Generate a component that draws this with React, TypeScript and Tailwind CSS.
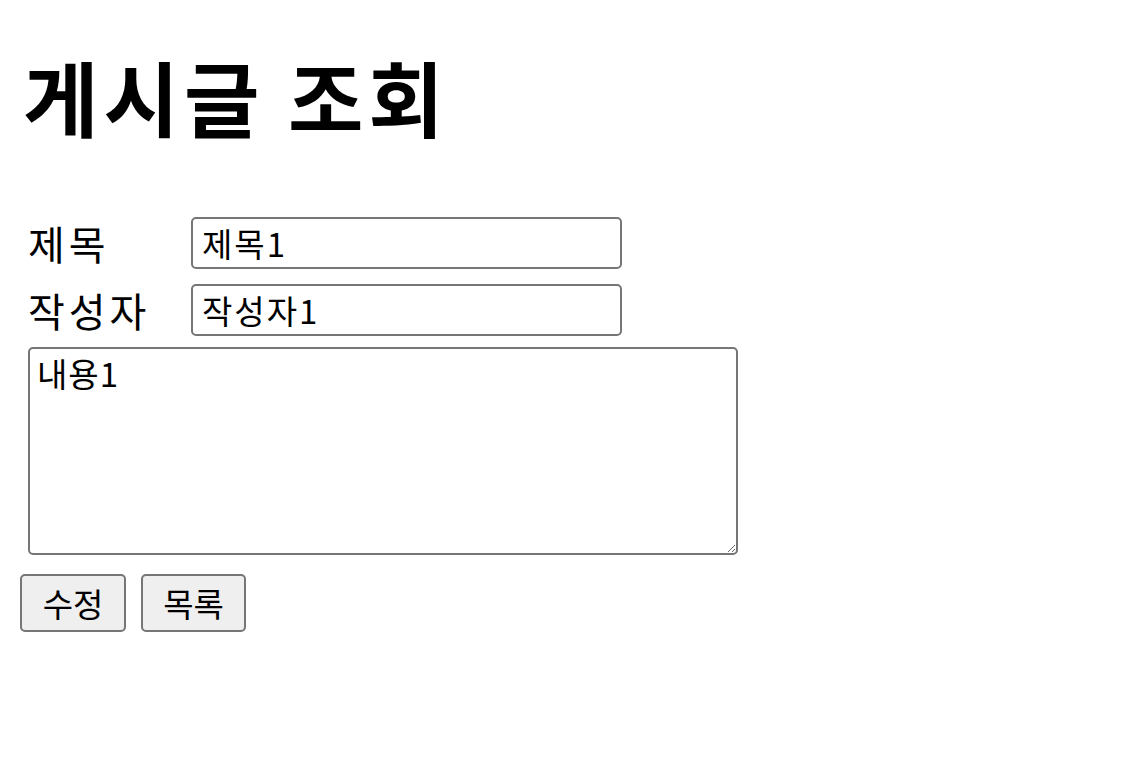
import React from "react";

const font = { fontFamily: '"Noto Sans CJK KR", "Noto Sans", sans-serif' };

const Field = ({ label, value }: { label: string; value: string }) => (
  <div className="flex items-center ml-[8px]">
    <label className="w-[163px] text-[40px] leading-[52px] tracking-[4px] text-black">{label}</label>
    <input
      readOnly
      defaultValue={value}
      className="w-[431px] h-[52px] border-2 border-[#767676] rounded-[5px] px-[9px] text-[33px] leading-none tracking-[2px] text-black bg-white outline-none"
    />
  </div>
);

export default function App() {
  return (
    <div className="p-5 bg-white min-h-screen text-black" style={font}>
      <h1 className="mt-[28px] ml-[3px] text-[82px] leading-[96px] tracking-[5px] font-bold">게시글 조회</h1>

      <div className="mt-[73px] flex flex-col gap-[15px]">
        <Field label="제목" value="제목1" />
        <Field label="작성자" value="작성자1" />
      </div>

      <textarea
        readOnly
        defaultValue="내용1"
        className="block mt-[11px] ml-[8px] w-[710px] h-[208px] border-2 border-[#767676] rounded-[5px] px-[7px] py-[2px] text-[33px] leading-[44px] tracking-[1px] bg-white outline-none"
        style={font}
      />

      <div className="mt-[19px] flex gap-[15px]">
        <button className="w-[106px] h-[58px] border-2 border-[#767676] rounded-[5px] bg-[#efefef] text-[33px] leading-none">
          수정
        </button>
        <button className="w-[105px] h-[58px] border-2 border-[#767676] rounded-[5px] bg-[#efefef] text-[33px] leading-none">
          목록
        </button>
      </div>
    </div>
  );
}
